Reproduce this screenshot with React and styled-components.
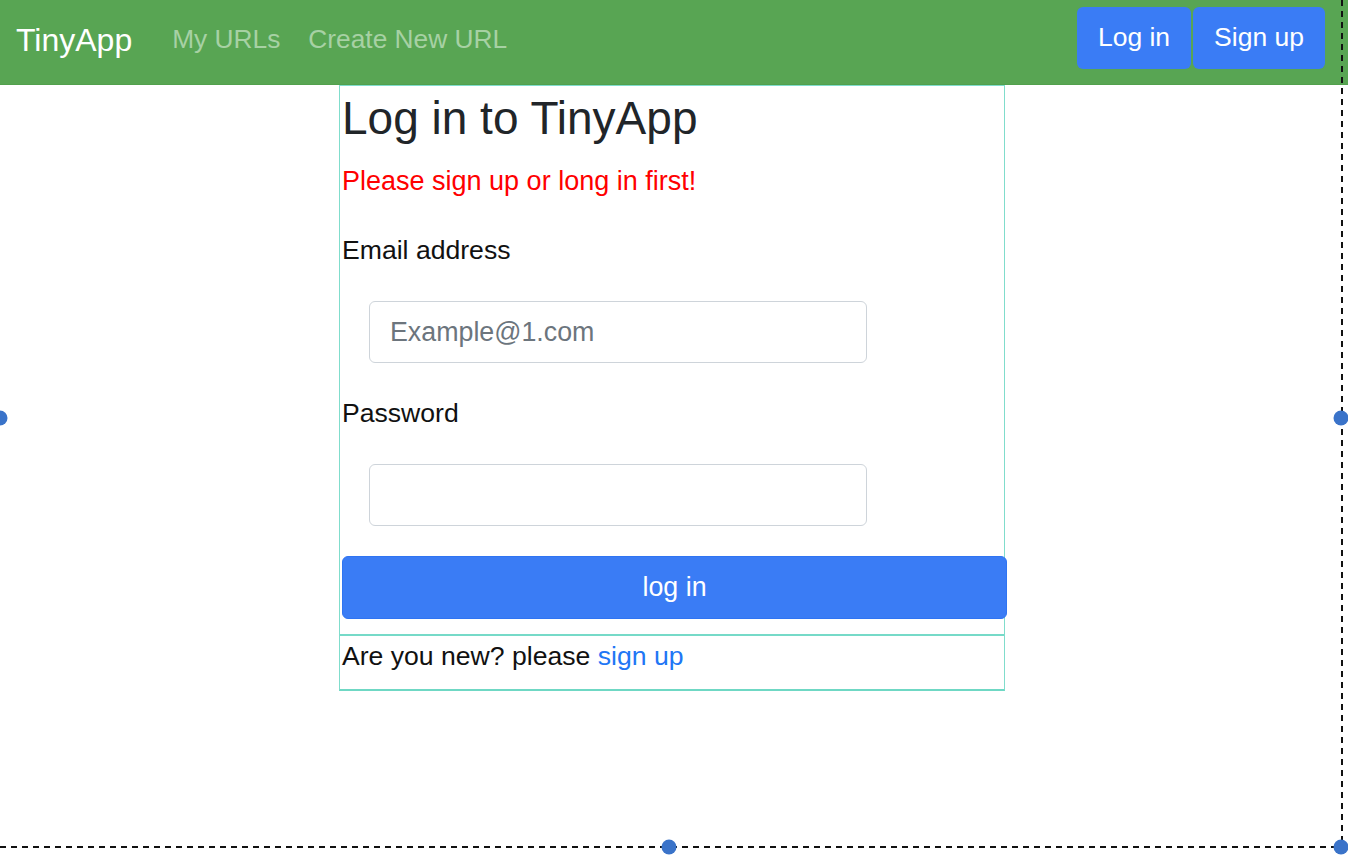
import React from "react";
import styled, { createGlobalStyle } from "styled-components";

const Global = createGlobalStyle`
  html, body { margin: 0; padding: 0; background: #fff; }
  body {
    font-family: "Liberation Sans", Arial, Helvetica, sans-serif;
    font-size: 26.5px;
    line-height: 1.5;
    color: #212529;
  }
  * { box-sizing: border-box; }
`;

const Page = styled.div`
  position: relative;
  width: 1348px;
  height: 866px;
  overflow: hidden;
`;

const Navbar = styled.nav`
  height: 85px;
  background: #58a553;
  border-bottom: 1px solid #52a04d;
  display: flex;
  align-items: center;
  padding: 0 23px 0 16px;
`;

const Brand = styled.a`
  font-size: 32px;
  color: #fff;
  text-decoration: none;
  margin-right: 26px;
  line-height: 1.5;
  margin-top: -4px;
`;

const NavLink = styled.a`
  font-size: 26.3px;
  color: #a7d1a4;
  text-decoration: none;
  padding: 0 14px;
  margin-top: -4px;
`;

const Spacer = styled.div`
  flex: 1;
`;

const NavButtons = styled.div`
  display: flex;
  gap: 2px;
  margin-top: -9px;
`;

const NavButton = styled.button`
  height: 62px;
  padding: 0 21px;
  border: none;
  border-radius: 6px;
  background: #3a7cf5;
  color: #fff;
  font-family: inherit;
  font-size: 26.5px;
  cursor: pointer;
`;

const Main = styled.main`
  padding-left: 339px;
`;

const Card = styled.section`
  width: 666px;
  border: 1px solid #80ddcc;
  border-bottom: 2px solid #6fd8c4;
  padding: 0 0 0 2px;
`;

const Title = styled.h3`
  margin: 5px 0 0 0;
  font-size: 46px;
  font-weight: 400;
  line-height: 54px;
  color: #212529;
`;

const Alert = styled.p`
  margin: 17px 0 0 0;
  font-size: 27px;
  line-height: 39px;
  color: #ff0000;
`;

const Label = styled.label`
  display: block;
  margin-top: ${(p) => p.$top}px;
  font-size: 26.6px;
  line-height: 39px;
  color: #111;
`;

const Input = styled.input`
  display: block;
  margin: 31px 0 0 27px;
  width: 498px;
  height: 62px;
  padding: 0 20px;
  border: 1px solid #ced4da;
  border-radius: 6px;
  font-family: inherit;
  font-size: 26.8px;
  color: #495057;
  background: #fff;
  &::placeholder { color: #6c757d; }
`;

const Submit = styled.button`
  display: block;
  margin-top: 30px;
  width: 665px;
  height: 63px;
  border: 1px solid #2f74f2;
  border-radius: 6px;
  background: #3a7cf5;
  color: #fff;
  font-family: inherit;
  font-size: 26.8px;
  cursor: pointer;
`;

const Footer = styled.div`
  margin: 15px 0 0 -2px;
  width: 664px;
  border-top: 2px solid #76dac8;
  padding: 1px 0 13px 2px;
  font-size: 26.6px;
  line-height: 39px;
  color: #111;
`;

const SignLink = styled.a`
  color: #2176f5;
  text-decoration: none;
`;

const Overlay = styled.svg`
  position: absolute;
  left: 0;
  top: 0;
  pointer-events: none;
`;

export default function App() {
  return (
    <Page>
      <Global />
      <Navbar>
        <Brand href="#">TinyApp</Brand>
        <NavLink href="#">My URLs</NavLink>
        <NavLink href="#">Create New URL</NavLink>
        <Spacer />
        <NavButtons>
          <NavButton>Log in</NavButton>
          <NavButton>Sign up</NavButton>
        </NavButtons>
      </Navbar>
      <Main>
        <Card>
          <Title>Log in to TinyApp</Title>
          <Alert>Please sign up or long in first!</Alert>
          <Label $top={30} htmlFor="email">Email address</Label>
          <Input id="email" type="email" placeholder="Example@1.com" />
          <Label $top={31} htmlFor="pw">Password</Label>
          <Input id="pw" type="password" />
          <Submit>log in</Submit>
          <Footer>
            Are you new? please <SignLink href="#">sign up</SignLink>
          </Footer>
        </Card>
      </Main>
      <Overlay width="1348" height="866" viewBox="0 0 1348 866">
        <line x1="1342" y1="0" x2="1342" y2="847" stroke="#111" strokeWidth="2" strokeDasharray="6 5" />
        <line x1="0" y1="847" x2="1342" y2="847" stroke="#111" strokeWidth="2" strokeDasharray="6 5" />
        <circle cx="0" cy="418" r="7.5" fill="#3a73c9" />
        <circle cx="1341" cy="418" r="7.5" fill="#3a73c9" />
        <circle cx="669" cy="847" r="7.5" fill="#3a73c9" />
        <circle cx="1341" cy="847" r="7.5" fill="#3a73c9" />
      </Overlay>
    </Page>
  );
}
